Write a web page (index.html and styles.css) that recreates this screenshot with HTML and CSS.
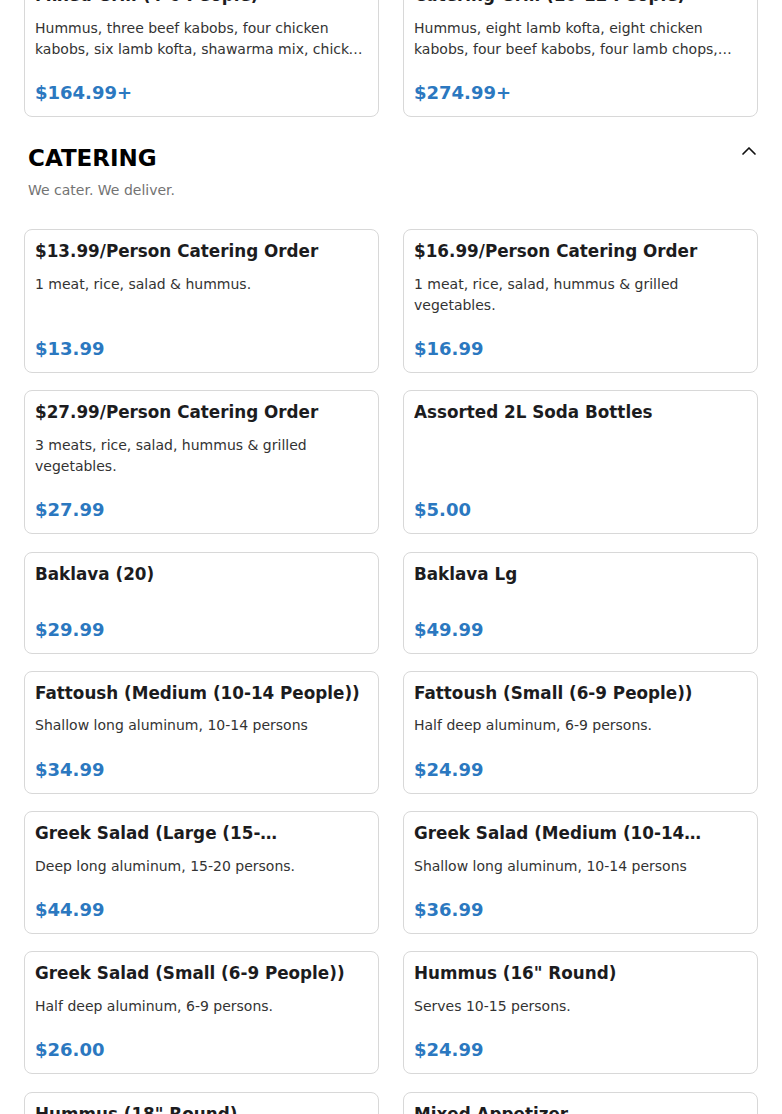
FILE: index.html
```html
<!DOCTYPE html>
<html lang="en">
<head>
<meta charset="utf-8">
<title>Menu - Catering</title>
<link rel="stylesheet" href="styles.css">
</head>
<body>
<main class="menu">
  <section class="section section-prev">
    <div class="grid">
      <article class="card">
        <h3 class="item-title">Mixed Grill (4-6 People)</h3>
        <p class="item-desc">Hummus, three beef kabobs, four chicken kabobs, six lamb kofta, shawarma mix, chicken shawarma, rice and salad.</p>
        <div class="item-price">$164.99+</div>
      </article>
      <article class="card">
        <h3 class="item-title">Catering Grill (10-12 People)</h3>
        <p class="item-desc">Hummus, eight lamb kofta, eight chicken kabobs, four beef kabobs, four lamb chops, shawarma mix, rice and salad.</p>
        <div class="item-price">$274.99+</div>
      </article>
    </div>
  </section>

  <section class="section section-catering">
    <header class="section-header">
      <div class="section-heading">
        <h2 class="section-title">CATERING</h2>
        <p class="section-sub">We cater. We deliver.</p>
      </div>
      <button class="collapse-btn" type="button" aria-label="Collapse">
        <svg width="24" height="24" viewBox="0 0 24 24" fill="none" stroke="#111" stroke-width="1.7" stroke-linecap="round" stroke-linejoin="round"><path d="M6 15l6-6 6 6"/></svg>
      </button>
    </header>
    <div class="grid">
      <article class="card">
        <h3 class="item-title">$13.99/Person Catering Order</h3>
        <p class="item-desc">1 meat, rice, salad &amp; hummus.</p>
        <div class="item-price">$13.99</div>
      </article>
      <article class="card">
        <h3 class="item-title">$16.99/Person Catering Order</h3>
        <p class="item-desc">1 meat, rice, salad, hummus &amp; grilled vegetables.</p>
        <div class="item-price">$16.99</div>
      </article>
      <article class="card">
        <h3 class="item-title">$27.99/Person Catering Order</h3>
        <p class="item-desc">3 meats, rice, salad, hummus &amp; grilled vegetables.</p>
        <div class="item-price">$27.99</div>
      </article>
      <article class="card">
        <h3 class="item-title">Assorted 2L Soda Bottles</h3>
        <div class="item-price">$5.00</div>
      </article>
      <article class="card">
        <h3 class="item-title">Baklava (20)</h3>
        <div class="item-price">$29.99</div>
      </article>
      <article class="card">
        <h3 class="item-title">Baklava Lg</h3>
        <div class="item-price">$49.99</div>
      </article>
      <article class="card">
        <h3 class="item-title">Fattoush (Medium (10-14 People))</h3>
        <p class="item-desc">Shallow long aluminum, 10-14 persons</p>
        <div class="item-price">$34.99</div>
      </article>
      <article class="card">
        <h3 class="item-title">Fattoush (Small (6-9 People))</h3>
        <p class="item-desc">Half deep aluminum, 6-9 persons.</p>
        <div class="item-price">$24.99</div>
      </article>
      <article class="card">
        <h3 class="item-title">Greek Salad (Large (15-20&nbsp;People))</h3>
        <p class="item-desc">Deep long aluminum, 15-20 persons.</p>
        <div class="item-price">$44.99</div>
      </article>
      <article class="card">
        <h3 class="item-title">Greek Salad (Medium (10-14 People))</h3>
        <p class="item-desc">Shallow long aluminum, 10-14 persons</p>
        <div class="item-price">$36.99</div>
      </article>
      <article class="card">
        <h3 class="item-title">Greek Salad (Small (6-9 People))</h3>
        <p class="item-desc">Half deep aluminum, 6-9 persons.</p>
        <div class="item-price">$26.00</div>
      </article>
      <article class="card">
        <h3 class="item-title">Hummus (16" Round)</h3>
        <p class="item-desc">Serves 10-15 persons.</p>
        <div class="item-price">$24.99</div>
      </article>
      <article class="card">
        <h3 class="item-title">Hummus (18" Round)</h3>
        <p class="item-desc">Serves 15-20 persons.</p>
        <div class="item-price">$29.99</div>
      </article>
      <article class="card">
        <h3 class="item-title">Mixed Appetizer</h3>
        <p class="item-desc">Hummus, baba ghanoush, tabbouleh and falafel.</p>
        <div class="item-price">$39.99</div>
      </article>
    </div>
  </section>
</main>
</body>
</html>
```

FILE: styles.css
```css
* {
  box-sizing: border-box;
}

html, body {
  margin: 0;
  padding: 0;
  background: #ffffff;
}

body {
  font-family: "DejaVu Sans", "Liberation Sans", sans-serif;
  color: #1c1c1c;
  overflow: hidden;
}

.menu {
  margin-top: -27px;
  padding: 0 24px;
}

.grid {
  display: grid;
  grid-template-columns: 1fr 1fr;
  column-gap: 24px;
  row-gap: 17.3px;
}

.card {
  display: flex;
  flex-direction: column;
  border: 1px solid #d8d8d8;
  border-radius: 8px;
  padding: 10px;
  background: #fff;
}

.item-title {
  margin: 0 0 11px;
  font-size: 16.8px;
  line-height: 22.5px;
  font-weight: 700;
  color: #1c1c1e;
  display: -webkit-box;
  -webkit-line-clamp: 1;
  -webkit-box-orient: vertical;
  overflow: hidden;
}

.item-desc {
  margin: 0;
  font-size: 14px;
  line-height: 21px;
  color: #333333;
  display: -webkit-box;
  -webkit-line-clamp: 2;
  -webkit-box-orient: vertical;
  overflow: hidden;
}

.item-price {
  margin-top: auto;
  padding-top: 19.5px;
  font-size: 18px;
  line-height: 27px;
  font-weight: 700;
  color: #2b78c0;
}

.section-catering {
  padding-top: 27px;
}

.section-header {
  display: flex;
  justify-content: space-between;
  align-items: flex-start;
  padding-left: 4px;
  margin-bottom: 28px;
}

.section-title {
  margin: 0;
  font-size: 23px;
  line-height: 28px;
  font-weight: 700;
  color: #000;
}

.section-sub {
  margin: 8px 0 0;
  font-size: 14px;
  line-height: 21px;
  color: #737373;
}

.collapse-btn {
  border: 0;
  background: none;
  padding: 0;
  margin: -5px -3px 0 0;
  width: 24px;
  height: 24px;
  display: flex;
  align-items: center;
  justify-content: center;
  cursor: pointer;
}
```
